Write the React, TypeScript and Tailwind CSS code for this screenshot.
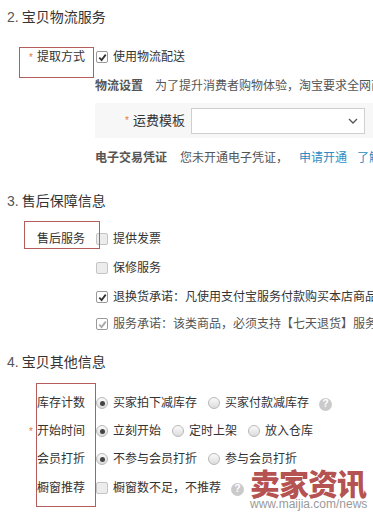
import React from 'react';

const Check: React.FC<{ checked?: boolean; disabled?: boolean }> = ({ checked, disabled }) => (
  <span
    className={`inline-flex h-[12px] w-[12px] shrink-0 items-center justify-center rounded-[2px] border ${
      checked ? 'border-[#9a9a9a] bg-white' : 'border-[#c4c4c4] bg-[#ececec]'
    }`}
  >
    {checked && (
      <svg width="9" height="9" viewBox="0 0 10 10">
        <path d="M1.5 5.2 L4 7.8 L8.6 1.8" fill="none" stroke={disabled ? '#a8a8a8' : '#333'} strokeWidth="2" />
      </svg>
    )}
  </span>
);

const Radio: React.FC<{ checked?: boolean }> = ({ checked }) => (
  <span className="inline-flex h-[12px] w-[12px] shrink-0 items-center justify-center rounded-full border border-[#b8b8b8] bg-gradient-to-b from-[#fafafa] to-[#dcdcdc]">
    {checked && <span className="h-[5px] w-[5px] rounded-full bg-[#444]" />}
  </span>
);

const Help = () => (
  <span className="inline-flex h-[13px] w-[13px] items-center justify-center rounded-full bg-[#cacaca] text-[10px] font-bold leading-none text-white">?</span>
);

const Star = () => <span className="mr-[4px] text-[10px] text-[#e4783f]">*</span>;

const Label: React.FC<{ req?: boolean; children: React.ReactNode }> = ({ req, children }) => (
  <div className="flex w-[85px] shrink-0 items-center justify-end">
    {req && <Star />}
    <span>{children}</span>
  </div>
);

const Opt: React.FC<{ children: React.ReactNode; radio?: boolean; checked?: boolean; disabled?: boolean; className?: string }> = ({
  children,
  radio,
  checked,
  disabled,
  className,
}) => (
  <span className={`flex items-center gap-[5px] whitespace-nowrap ${className ?? ''}`}>
    {radio ? <Radio checked={checked} /> : <Check checked={checked} disabled={disabled} />}
    <span className={disabled ? 'text-[#555]' : ''}>{children}</span>
  </span>
);

export default function App() {
  return (
    <div
      className="relative h-[513px] w-[373px] overflow-hidden bg-white text-[12px] text-[#333]"
      style={{ fontFamily: '"Liberation Sans", "Noto Sans CJK SC", sans-serif' }}
    >
      <div className="pt-[7px]">
        {/* 2 */}
        <h2 className="flex h-[20px] items-center pl-[7px] text-[14px] font-normal leading-[20px]">
          <span className="mr-[3px] text-[#555]">2.</span>宝贝物流服务
        </h2>
        <div className="mt-[20px] flex h-[20px] items-center">
          <Label req>提取方式</Label>
          <Opt checked className="ml-[11px]">使用物流配送</Opt>
        </div>
        <div className="mt-[9px] flex h-[20px] items-center whitespace-nowrap pl-[95px]">
          <span className="font-bold text-[#555]">物流设置</span>
          <span className="ml-[12px] text-[#555]">为了提升消费者购物体验，淘宝要求全网商品设置运费模板</span>
        </div>
        <div className="ml-[95px] mt-[7px] flex h-[35px] items-center bg-[#f7f7f7]">
          <div className="flex w-[90px] items-center justify-end">
            <Star />
            <span className="text-[13px]">运费模板</span>
          </div>
          <div className="ml-[6px] flex h-[26px] w-[174px] items-center justify-end border border-[#cfcfcf] bg-white pr-[6px]">
            <svg width="10" height="6" viewBox="0 0 10 6">
              <path d="M1 1 L5 5 L9 1" fill="none" stroke="#555" strokeWidth="1.3" />
            </svg>
          </div>
        </div>
        <div className="mt-[10px] flex h-[20px] items-center whitespace-nowrap pl-[95px]">
          <span className="font-bold text-[#555]">电子交易凭证</span>
          <span className="ml-[13px] text-[#555]">您未开通电子凭证，</span>
          <span className="ml-[11px] text-[#2b8dc4]">申请开通</span>
          <span className="ml-[10px] text-[#2b8dc4]">了解详情</span>
        </div>

        {/* 3 */}
        <h2 className="mt-[23px] flex h-[20px] items-center pl-[7px] text-[14px] font-normal leading-[20px]">
          <span className="mr-[3px] text-[#555]">3.</span>售后保障信息
        </h2>
        <div className="mt-[18px] flex h-[20px] items-center">
          <Label>售后服务</Label>
          <Opt className="ml-[11px]">提供发票</Opt>
        </div>
        <div className="mt-[9px] flex h-[20px] items-center pl-[96px]">
          <Opt>保修服务</Opt>
        </div>
        <div className="mt-[9px] flex h-[20px] items-center pl-[96px]">
          <Opt checked>退换货承诺：凡使用支付宝服务付款购买本店商品，若存在质量问题</Opt>
        </div>
        <div className="mt-[7px] flex h-[20px] items-center pl-[96px]">
          <Opt checked disabled>服务承诺：该类商品，必须支持【七天退货】服务</Opt>
        </div>

        {/* 4 */}
        <h2 className="mt-[18px] flex h-[20px] items-center pl-[7px] text-[14px] font-normal leading-[20px]">
          <span className="mr-[3px] text-[#555]">4.</span>宝贝其他信息
        </h2>
        <div className="mt-[21px] flex h-[20px] items-center">
          <Label>库存计数</Label>
          <Opt radio checked className="ml-[11px]">买家拍下减库存</Opt>
          <Opt radio className="ml-[11px]">买家付款减库存</Opt>
          <span className="ml-[10px]"><Help /></span>
        </div>
        <div className="mt-[8px] flex h-[20px] items-center">
          <Label req>开始时间</Label>
          <Opt radio checked className="ml-[11px]">立刻开始</Opt>
          <Opt radio className="ml-[11px]">定时上架</Opt>
          <Opt radio className="ml-[11px]">放入仓库</Opt>
        </div>
        <div className="mt-[8px] flex h-[20px] items-center">
          <Label>会员打折</Label>
          <Opt radio checked className="ml-[11px]">不参与会员打折</Opt>
          <Opt radio className="ml-[11px]">参与会员打折</Opt>
        </div>
        <div className="mt-[9px] flex h-[20px] items-center">
          <Label>橱窗推荐</Label>
          <Opt className="ml-[11px]">橱窗数不足，不推荐</Opt>
          <span className="ml-[10px]"><Help /></span>
        </div>
      </div>

      {/* annotation boxes */}
      <div className="absolute left-[19px] top-[47px] h-[31px] w-[75px] border border-[#b65c5c]" />
      <div className="absolute left-[24px] top-[221px] h-[28px] w-[76px] border border-[#b65c5c]" />
      <div className="absolute left-[36px] top-[383px] h-[124px] w-[60px] border border-[#b65c5c]" />

      {/* watermark */}
      <div className="absolute left-[250px] top-[466px] flex w-[120px] flex-col items-start leading-none">
        <span
          className="text-[30px] font-black leading-[32px] tracking-[-1px] text-[#a83232]/85"
          style={{ fontFamily: '"Noto Sans CJK SC", sans-serif' }}
        >
          卖家资讯
        </span>
        <span className="text-[12px] leading-[13px] text-[#9a9a9a]" style={{ fontFamily: '"Liberation Sans", sans-serif' }}>
          www.maijia.com/news
        </span>
      </div>
    </div>
  );
}
